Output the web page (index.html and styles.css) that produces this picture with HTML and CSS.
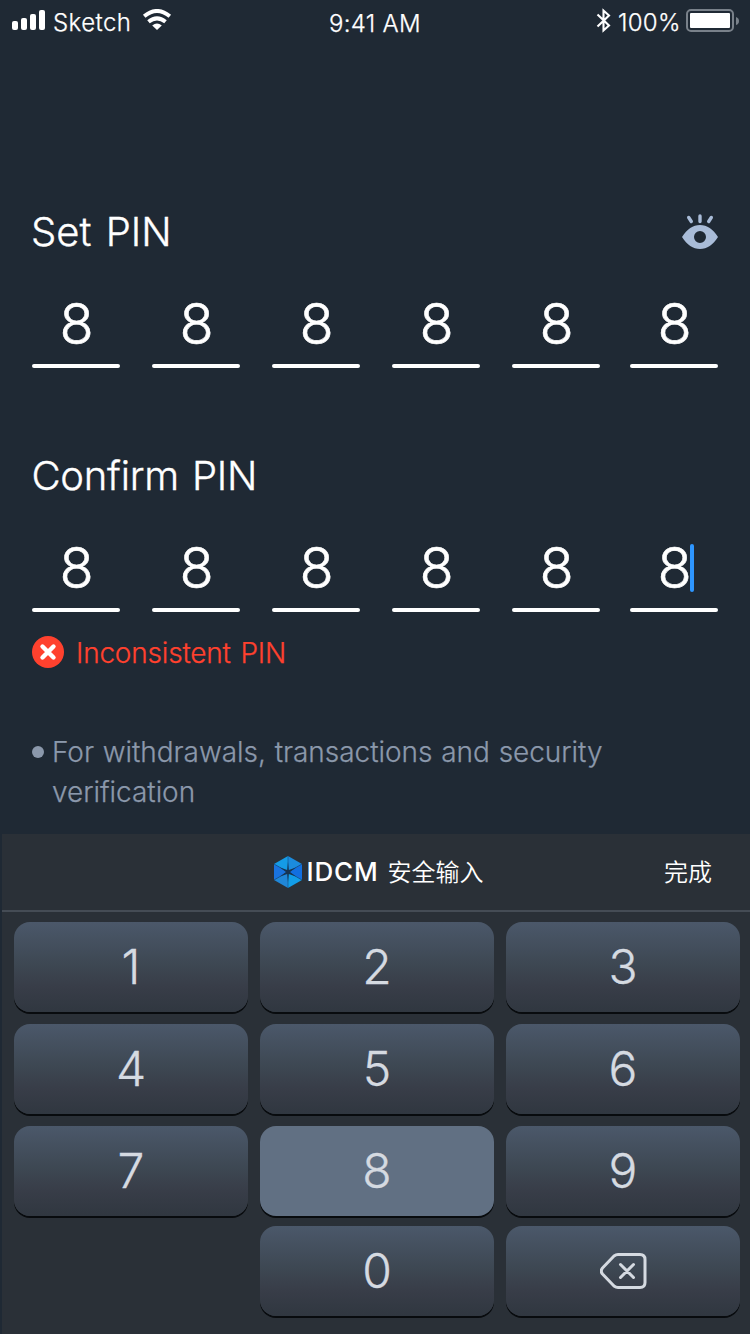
FILE: index.html
```html
<!DOCTYPE html>
<html lang="en">
<head>
<meta charset="utf-8">
<title>Set PIN</title>
<link rel="stylesheet" href="styles.css">
</head>
<body>
<div class="screen">
  <header class="status">
    <div class="status-left">
      <svg class="signal" width="34" height="20" viewBox="0 0 34 20" fill="#fff"><rect y="11" width="6" height="9" rx="2"/><rect x="9" y="8" width="6" height="12" rx="2"/><rect x="18" y="4" width="6" height="16" rx="2"/><rect x="27" width="6" height="20" rx="2"/></svg>
      <span class="carrier">Sketch</span>
      <svg class="wifi" width="30" height="22" viewBox="0 0 30 22" fill="none" stroke="#fff" stroke-width="4"><path d="M2.200 7.200Q15-3.200 27.800 7.200"/><path d="M6.500 12.800Q15 6 23.500 12.800"/><path d="M10.200 16.500Q15 12.500 19.800 16.500L15 21Z" fill="#fff" stroke="none"/></svg>
    </div>
    <span class="clock">9:41 AM</span>
    <div class="status-right">
      <svg class="bluetooth" width="16" height="25" viewBox="0 0 16 25" fill="none" stroke="#fff" stroke-width="2.100"><path d="M1.500 6.500L13 17.500L7.500 22.500V2.500L13 7.500L1.500 18.500"/></svg>
      <span class="percent">100%</span>
      <svg class="battery" width="54" height="24" viewBox="0 0 54 24"><rect x="1" y="1" width="46" height="21" rx="4" fill="none" stroke="#79818a" stroke-width="2"/><rect x="4" y="4" width="40" height="15" rx="1" fill="#fff"/><path d="M50 8Q53 9 53 12T50 16Z" fill="#79818a"/></svg>
    </div>
  </header>

  <main class="form">
    <section class="group">
      <div class="heading"><h1 class="title title-set">Set PIN</h1>
        <svg class="eye" width="36" height="36" viewBox="0 0 36 36"><g stroke="#a9bcd8" stroke-width="3.400" stroke-linecap="round"><path d="M6.700 3.500L9.300 7.500M18 2V7.500M29.300 3.500L26.700 7.500"/></g><path fill="#a9bcd8" fill-rule="evenodd" d="M0 23C5 15 11 11 18 11S31 15 36 23C31 31 25 35 18 35S5 31 0 23ZM18 17A6 6 0 1 0 18 29A6 6 0 1 0 18 17Z"/></svg>
      </div>
      <div class="digits"><span class="digit">8</span><span class="digit">8</span><span class="digit">8</span><span class="digit">8</span><span class="digit">8</span><span class="digit digit-last">8</span></div>
    </section>
    <section class="group">
      <div class="heading"><h2 class="title title-confirm">Confirm PIN</h2></div>
      <div class="digits"><span class="digit">8</span><span class="digit">8</span><span class="digit">8</span><span class="digit">8</span><span class="digit">8</span><span class="digit digit-last">8<i class="caret"></i></span></div>
    </section>
    <p class="error"><svg width="32" height="32" viewBox="0 0 32 32"><circle cx="16" cy="16" r="16" fill="#ff412e"/><path d="M10.500 10.500L21.500 21.500M21.500 10.500L10.500 21.500" stroke="#fff" stroke-width="4.400" stroke-linecap="round"/></svg><span class="error-text">Inconsistent PIN</span></p>
    <div class="note"><i class="bullet"></i><p class="note-text">For withdrawals, transactions and security<br>verification</p></div>
  </main>

  <section class="keyboard">
    <div class="toolbar">
      <div class="brand">
        <svg class="logo" width="28" height="32" viewBox="0 0 28 32"><path d="M14 0L28 8L14 16Z" fill="#1b8bdd"/><path d="M14 0L0 8L14 16Z" fill="#159be6"/><path d="M0 8V24L14 16Z" fill="#1973df"/><path d="M28 8V24L14 16Z" fill="#126fe0"/><path d="M0 24L14 32V16Z" fill="#2087d8"/><path d="M28 24L14 32V16Z" fill="#129de8"/><path d="M0 8L28 24M28 8L0 24M14 0V32" stroke="#17436b" stroke-width=".5"/><path d="M14 6L14.800 14L22 11.500L16 16L22 20.500L14.800 18L14 26L13.200 18L6 20.500L12 16L6 11.500L13.200 14Z" fill="#173451"/></svg>
        <span class="brand-name">IDCM</span><span class="brand-label" lang="zh">安全输入</span>
      </div>
      <span class="done" lang="zh">完成</span>
    </div>
    <div class="keys">
      <span class="key">1</span><span class="key">2</span><span class="key">3</span>
      <span class="key">4</span><span class="key">5</span><span class="key">6</span>
      <span class="key">7</span><span class="key key-active">8</span><span class="key">9</span>
      <span class="key key-zero">0</span><span class="key"><svg class="delete" width="48" height="38" viewBox="0 0 48 38" fill="none" stroke="#d5dae1" stroke-width="3" stroke-linecap="round" stroke-linejoin="round"><path d="M18 2.500H40Q45 2.500 45 7.500V30.500Q45 35.500 40 35.500H18Q16 35.500 14 34L2.500 22Q0 19 2.500 16L14 4Q16 2.500 18 2.500Z"/><path d="M20.500 12.500L33.500 25.500M33.500 12.500L20.500 25.500"/></svg></span>
    </div>
  </section>
</div>
</body>
</html>
```
FILE: styles.css
```css
* { box-sizing: border-box; }
body, h1, h2, p { margin: 0; }
body { background: #1f2934; color: #fff; font-family: Inter, "Noto Sans CJK SC", sans-serif; font-weight: 300; }
.screen { width: 750px; height: 1334px; display: flex; flex-direction: column; background: #1f2934; overflow: hidden; }
.status { height: 46px; display: grid; grid-template-columns: 1fr auto 1fr; font-size: 24px; line-height: 46px; -webkit-text-stroke: .25px currentColor; }
.status-left, .status-right { display: flex; align-items: flex-start; }
.status-left { padding-left: 12px; }
.signal { margin-top: 10px; }
.carrier { width: 90px; padding-left: 7px; letter-spacing: .45px; }
.wifi { margin-top: 9px; margin-left: 6px; }
.clock { padding-top: 1px; letter-spacing: .3px; }
.status-right { justify-content: flex-end; padding-right: 10px; }
.bluetooth { margin-top: 8px; margin-right: 6px; }
.percent { width: 62px; white-space: nowrap; letter-spacing: .3px; }
.battery { margin-top: 9px; margin-left: 6px; }
.form { height: 788px; padding: 162px 32px 0; }
.group { height: 244px; }
.heading { height: 48px; display: flex; justify-content: space-between; align-items: center; }
.title { font-size: 40px; line-height: 48px; font-weight: 300; -webkit-text-stroke: .35px currentColor; }
.title-set { word-spacing: 3px; margin-left: -1px; }
.title-confirm { word-spacing: 2px; margin-left: -.5px; letter-spacing: -.25px; }
.digits { display: flex; gap: 32px; margin-top: 32px; }
.digit { position: relative; width: 88px; height: 80px; padding: 2px 0 0 1px; text-align: center; font-size: 56px; line-height: 68px; flex: none; -webkit-text-stroke: .6px currentColor; }
.digit::after { content: ""; position: absolute; left: 0; right: 0; bottom: 0; height: 4px; border-radius: 2px; background: #fff; }
.digit-last { margin-left: -2px; }
.caret { position: absolute; left: 60px; top: 12px; width: 4px; height: 48px; border-radius: 2px; background: #2e96ff; }
.error { height: 32px; margin-top: -60px; display: flex; align-items: center; gap: 12px; color: #ff412e; font-size: 28px; line-height: 32px; -webkit-text-stroke: .25px currentColor; }
.error-text { padding-top: 1px; word-spacing: 2px; letter-spacing: -.2px; }
.note { display: flex; margin-top: 64px; color: #8b98ab; font-size: 28px; line-height: 40px; -webkit-text-stroke: .25px currentColor; }
.note-text { word-spacing: 1px; letter-spacing: -.04px; }
.bullet { width: 12px; height: 12px; margin: 14px 8px 0 0; border-radius: 50%; background: #8b98ab; }
.keyboard { height: 500px; margin-left: 2px; background: #2a3037; }
.toolbar { height: 78px; display: grid; grid-template-columns: 1fr auto 1fr; align-items: center; border-bottom: 2px solid #454c55; font-size: 24px; font-weight: 350; }
.brand { grid-column: 2; display: flex; align-items: center; padding-left: 5px; }
.brand-name { margin-left: 5px; font-family: Inter, sans-serif; font-size: 26px; font-weight: 550; letter-spacing: .8px; line-height: 32px; padding-bottom: 1px; }
.brand-label { margin-left: 9px; padding-bottom: 4px; }
.done { justify-self: end; padding: 0 38px 4px 0; }
.keys { display: grid; grid-template-columns: repeat(3, 234px); grid-template-rows: 102px 102px 100px 90px; column-gap: 12px; padding: 10px 10px 0 12px; }
.key { height: 90px; display: flex; align-items: center; justify-content: center; border-radius: 16px; background: linear-gradient(#4b586a, #3d4752 48%, #383d48 72%, #303740); box-shadow: 0 2px #080b0e; color: #d5dae1; font-size: 48px; line-height: 58px; padding-bottom: 1px; -webkit-text-stroke: .3px currentColor; }
.key-active { background: #617083; }
.key-zero { grid-column: 2; }
.delete { margin-left: 2px; margin-top: 1px; }
```
